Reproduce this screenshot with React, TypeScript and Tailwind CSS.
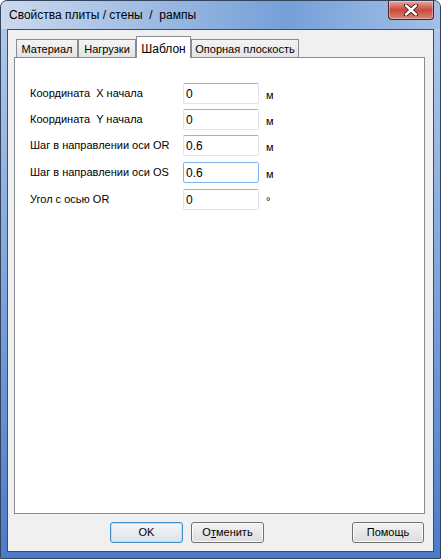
import React from "react";

const tabs = [
  { label: "Материал", cls: "w-[62px]", active: false },
  { label: "Нагрузки", cls: "w-[58px]", active: false },
  { label: "Шаблон", cls: "w-[55px]", active: true },
  { label: "Опорная плоскость", cls: "w-[108px]", active: false },
];

const rows = [
  { label: "Координата  X начала", value: "0", unit: "м", gap: "", focus: false },
  { label: "Координата  Y начала", value: "0", unit: "м", gap: "mt-[5px]", focus: false },
  { label: "Шаг в направлении оси OR", value: "0.6", unit: "м", gap: "mt-[5px]", focus: false },
  { label: "Шаг в направлении оси OS", value: "0.6", unit: "м", gap: "mt-[6px]", focus: true },
  { label: "Угол с осью OR", value: "0", unit: "°", gap: "mt-[6px]", focus: false },
];

function CloseButton() {
  return (
    <div className="w-[46px] h-[19px] rounded-b-[4px] border border-t-0 border-[#4b2320] bg-gradient-to-b from-[#e6aa9c] via-[#c8473a] to-[#d98674] flex items-center justify-center shadow-[inset_0_0_0_1px_rgba(255,255,255,0.35)]">
      <svg width="16" height="12" viewBox="0 0 16 12">
        <path d="M3 1.5 L13 10.5 M13 1.5 L3 10.5" stroke="#3a1a16" strokeWidth="4.2" strokeLinecap="round" />
        <path d="M3 1.5 L13 10.5 M13 1.5 L3 10.5" stroke="#ffffff" strokeWidth="2.4" strokeLinecap="round" />
      </svg>
    </div>
  );
}

export default function App() {
  return (
    <div className="w-[441px] h-[559px] bg-white font-['Liberation_Sans',Arial,sans-serif] text-black">
      <div className="w-full h-full flex flex-col rounded-t-[7px] border border-[#34445c] bg-gradient-to-b from-[#b4cbea] via-[#7ea5dc] to-[#4a7bcb] overflow-hidden">
        {/* TITLE BAR */}
        <div className="h-[28px] flex items-start justify-between bg-gradient-to-r from-[#cbd9ed] via-[#75a0d8] via-65% to-[#a3bfe6] rounded-t-[6px]">
          <span className="pl-[8px] leading-[28px] text-[12px] whitespace-pre">Свойства плиты / стены  /  рампы</span>
          <div className="mr-[6px]">
            <CloseButton />
          </div>
        </div>

        {/* CLIENT */}
        <div className="flex-1 mx-[6px] mb-[6px] border border-[#3b4d68] bg-[#f0f0f0] flex flex-col">
          {/* TABS */}
          <div className="h-[21px] mt-[6px] ml-[8px] flex items-end text-[11px]">
            {tabs.map((t) =>
              t.active ? (
                <div
                  key={t.label}
                  className={`${t.cls} h-[22px] -mb-[1px] relative z-10 bg-white border border-b-0 border-[#898c95] flex items-start justify-center pt-[3px] text-[12px]`}
                >
                  {t.label}
                </div>
              ) : (
                <div
                  key={t.label}
                  className={`${t.cls} h-[18px] bg-gradient-to-b from-[#f4f4f4] to-[#e4e4e4] border border-b-0 border-[#898c95] flex items-center justify-center pt-[1px]`}
                >
                  {t.label}
                </div>
              )
            )}
          </div>

          {/* PANEL */}
          <div className="ml-[6px] w-[411px] h-[457px] border border-[#898c95] bg-white pt-[25px] pl-[15px]">
            {rows.map((r) => (
              <div key={r.label} className={`${r.gap} h-[21px] flex items-center`}>
                <span className="w-[153px] text-[11px] whitespace-pre">{r.label}</span>
                <div
                  className={`w-[76px] h-[21px] rounded-[2px] border flex items-center pl-[2px] text-[12px] ${
                    r.focus
                      ? "border-[#7eb4ea]"
                      : "border-[#e2e3ea] border-t-[#abadb3]"
                  }`}
                >
                  {r.value}
                </div>
                <span className="ml-[7px] text-[11px] pt-[3px]">{r.unit}</span>
              </div>
            ))}
          </div>

          {/* BUTTONS */}
          <div className="mt-[8px] ml-[102px] mr-[9px] flex items-start text-[11px]">
            <button className="w-[73px] h-[21px] rounded-[3px] border border-[#3c8fc9] bg-gradient-to-b from-[#f3f6f8] to-[#dde4ea] shadow-[inset_0_0_0_1px_#b6e1f8]">
              OK
            </button>
            <button className="ml-[8px] w-[73px] h-[21px] rounded-[3px] border border-[#707070] bg-gradient-to-b from-[#f2f2f2] to-[#dcdcdc] shadow-[inset_0_0_0_1px_#fbfbfb]">
              О<span className="underline">т</span>менить
            </button>
            <button className="ml-auto w-[72px] h-[21px] rounded-[3px] border border-[#707070] bg-gradient-to-b from-[#f2f2f2] to-[#dcdcdc] shadow-[inset_0_0_0_1px_#fbfbfb]">
              Помощь
            </button>
          </div>
        </div>
      </div>
    </div>
  );
}
